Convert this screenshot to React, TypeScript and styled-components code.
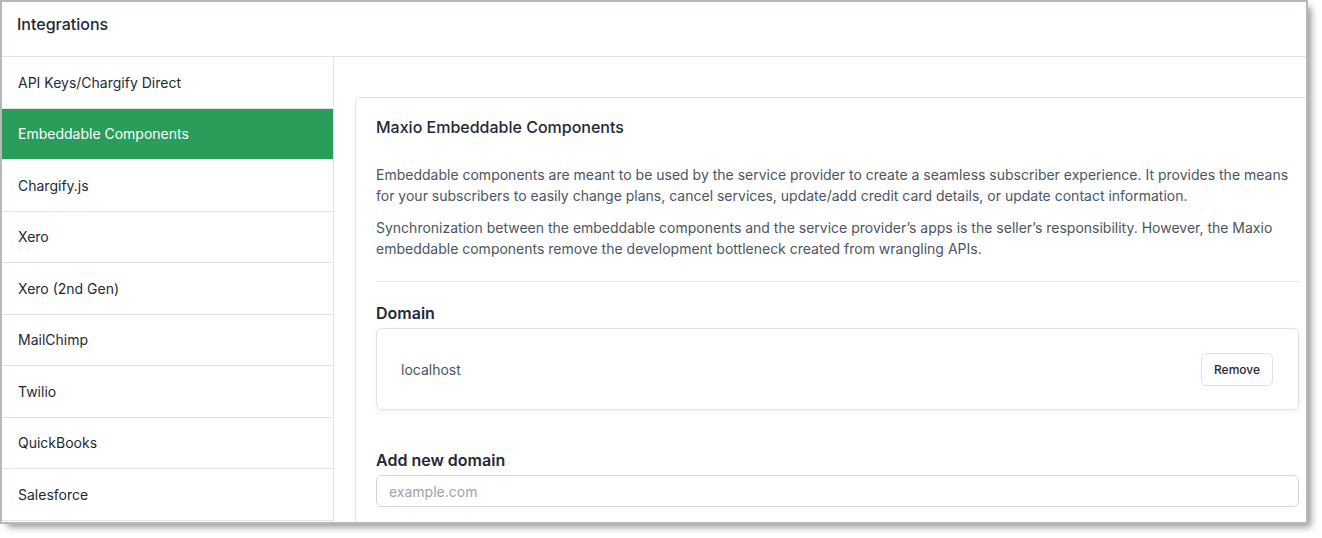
import React from "react";
import styled, { createGlobalStyle } from "styled-components";

const GlobalStyle = createGlobalStyle`
  html, body {
    margin: 0;
    padding: 0;
    background: #ffffff;
  }
  body {
    font-family: Inter, "Noto Sans", "Liberation Sans", sans-serif;
    -webkit-font-smoothing: antialiased;
  }
`;

const Stage = styled.div`
  width: 1322px;
  height: 538px;
  padding: 2px 0 0 2px;
  box-sizing: border-box;
  overflow: hidden;
`;

const Window = styled.div`
  width: 1304px;
  height: 520px;
  background: #ffffff;
  overflow: hidden;
  display: flex;
  flex-direction: column;
  box-shadow: 0 0 0 2px #b3b8b8, 5px 5px 7px rgba(60, 66, 66, 0.55);
`;

const Header = styled.header`
  height: 55px;
  box-sizing: border-box;
  border-bottom: 1px solid #e1e3e6;
  padding: 12px 15px 0;
  font-size: 16px;
  line-height: 20px;
  font-weight: 500;
  color: #1f2937;
  flex-shrink: 0;
`;

const Body = styled.div`
  display: flex;
  flex: 1;
  min-height: 0;
`;

const Sidebar = styled.nav`
  width: 332px;
  flex-shrink: 0;
  box-sizing: border-box;
  border-right: 1px solid #e1e3e6;
  display: flex;
  flex-direction: column;
`;

const NavItem = styled.div<{ $active?: boolean }>`
  height: 51.5px;
  flex-shrink: 0;
  box-sizing: border-box;
  border-bottom: 1px solid #e1e3e6;
  display: flex;
  align-items: center;
  padding: 0 16px;
  font-size: 14px;
  color: ${(p) => (p.$active ? "#ffffff" : "#1f2937")};
  background: ${(p) => (p.$active ? "#2a9d5a" : "#ffffff")};
`;

const Main = styled.main`
  flex: 1;
  padding: 40px 0 0 21px;
  overflow: hidden;
`;

const Card = styled.section`
  width: 965px;
  box-sizing: border-box;
  border: 1px solid #e1e3e6;
  border-radius: 4px 0 0 0;
  padding: 19px 20px 20px;
`;

const CardTitle = styled.h2`
  margin: 0 0 27px;
  font-size: 16px;
  line-height: 20px;
  font-weight: 500;
  color: #1f2937;
`;

const Paragraph = styled.p`
  margin: 0 0 11px;
  font-size: 14px;
  line-height: 21px;
  color: #4b5563;
`;

const Divider = styled.hr`
  border: none;
  border-top: 1px solid #e5e7eb;
  margin: 22px 0 19px;
`;

const SectionLabel = styled.h3`
  margin: 0 0 3px;
  font-size: 16px;
  line-height: 24px;
  font-weight: 600;
  color: #1f2937;
`;

const DomainBox = styled.div`
  display: flex;
  align-items: center;
  justify-content: space-between;
  box-sizing: border-box;
  height: 82px;
  padding: 0 25px 0 24px;
  border: 1px solid #dfe1e5;
  border-radius: 6px;
  box-shadow: 0 2px 6px rgba(0, 0, 0, 0.06);
  font-size: 14px;
  color: #4b5563;
  margin-bottom: 38px;
`;

const RemoveButton = styled.button`
  height: 33px;
  width: 72px;
  border: 1px solid #dfe1e5;
  border-radius: 6px;
  background: #ffffff;
  font-family: inherit;
  font-size: 12px;
  font-weight: 500;
  color: #1f2937;
  cursor: pointer;
`;

const TextInput = styled.input`
  display: block;
  width: 100%;
  height: 32px;
  box-sizing: border-box;
  border: 1px solid #d1d5db;
  border-radius: 6px;
  padding: 0 12px;
  font-family: inherit;
  font-size: 14px;
  color: #1f2937;
  outline: none;

  &::placeholder {
    color: #9ca3af;
  }
`;

const navItems = [
  "API Keys/Chargify Direct",
  "Embeddable Components",
  "Chargify.js",
  "Xero",
  "Xero (2nd Gen)",
  "MailChimp",
  "Twilio",
  "QuickBooks",
  "Salesforce",
];

const App = () => {
  return (
    <>
      <GlobalStyle />
      <Stage>
        <Window>
          <Header>Integrations</Header>
          <Body>
            <Sidebar>
              {navItems.map((item) => (
                <NavItem key={item} $active={item === "Embeddable Components"}>
                  {item}
                </NavItem>
              ))}
            </Sidebar>
            <Main>
              <Card>
                <CardTitle>Maxio Embeddable Components</CardTitle>
                <Paragraph>
                  Embeddable components are meant to be used by the service provider to create a
                  seamless subscriber experience. It provides the means for your subscribers to
                  easily change plans, cancel services, update/add credit card details, or update
                  contact information.
                </Paragraph>
                <Paragraph>
                  Synchronization between the embeddable components and the service provider’s apps
                  is the seller’s responsibility. However, the Maxio embeddable components remove
                  the development bottleneck created from wrangling APIs.
                </Paragraph>
                <Divider />
                <SectionLabel>Domain</SectionLabel>
                <DomainBox>
                  <span>localhost</span>
                  <RemoveButton type="button">Remove</RemoveButton>
                </DomainBox>
                <SectionLabel>Add new domain</SectionLabel>
                <TextInput placeholder="example.com" />
              </Card>
            </Main>
          </Body>
        </Window>
      </Stage>
    </>
  );
};

export default App;
